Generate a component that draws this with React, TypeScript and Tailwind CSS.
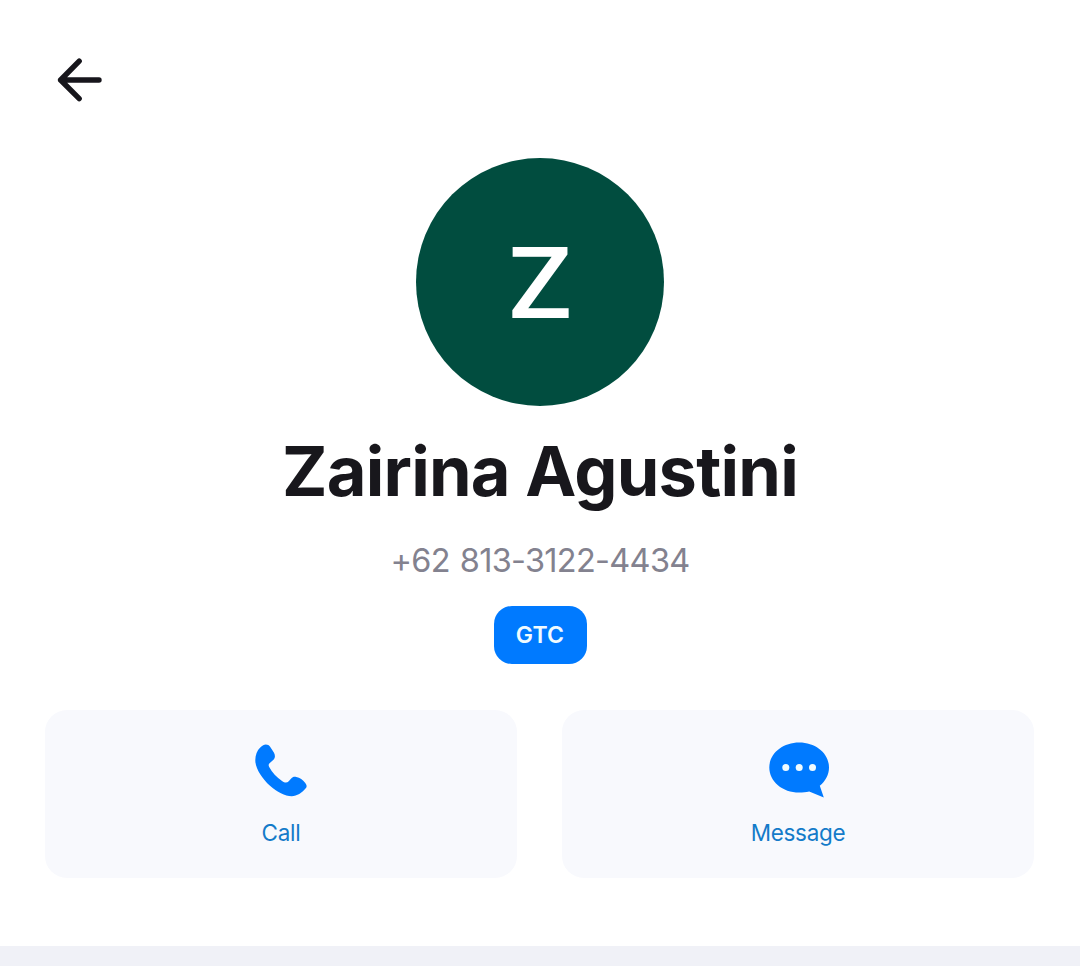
interface ActionCardProps {
    label: string;
    children: React.ReactNode;
}

function ActionCard({ label, children }: ActionCardProps) {
    return (
        <button className="flex h-[168px] flex-1 flex-col items-center rounded-[22px] bg-[#f8f9fd] pt-[30px]">
            {children}
            <span className="mt-[18px] text-[22.5px] leading-[30px] tracking-[-0.3px] text-[#147bc9]">{label}</span>
        </button>
    );
}

export default function App() {
    return (
        <div className="flex h-[966px] w-full flex-col overflow-hidden bg-white font-['Inter','Liberation_Sans',sans-serif] [font-optical-sizing:none]">
            {/* Header */}
            <header className="flex h-[158px] shrink-0 pl-[56px] pt-[56px]">
                <button aria-label="Back" className="h-12 w-12">
                    <svg width="48" height="48" viewBox="0 0 48 48" fill="none" stroke="#17161c" strokeWidth="5.4" strokeLinecap="round" strokeLinejoin="round">
                        <path d="M23.2 5.2L4.6 24L23.2 42.6M4.6 24H43" />
                    </svg>
                </button>
            </header>

            {/* Profile */}
            <section className="flex shrink-0 flex-col items-center">
                <div className="flex h-[248px] w-[248px] items-center justify-center rounded-full bg-[#014d3f]">
                    <span className="scale-x-[1.06] pt-[3px] font-['Roboto',sans-serif] text-[100px] font-medium leading-none text-white">Z</span>
                </div>
                <h1 className="mt-[26px] text-[68.5px] font-bold leading-[80px] tracking-[-0.75px] text-[#18171c]">
                    Zairina Agustini
                </h1>
                <p className="mt-[29px] text-[32.5px] leading-[40px] tracking-[-0.7px] [word-spacing:1.5px] text-[#83828f]">+62 813-3122-4434</p>
                <span className="mt-[25px] flex h-[58px] w-[93px] items-center justify-center rounded-[18px] bg-[#007aff] text-[23px] font-semibold tracking-[0.2px] text-[#f0fbff]">
                    GTC
                </span>
            </section>

            {/* Actions */}
            <section className="mt-[45.5px] flex shrink-0 gap-[45px] pl-[45px] pr-[46px]">
                <ActionCard label="Call">
                    <svg width="60" height="60" viewBox="0 0 60 60" fill="#007aff">
                        <path d="M9 7.8C11.5 5.3 13 4.5 14.8 4.5C16.8 4.5 18 5.2 19.1 6.8L22.7 12.3C24.6 15.4 24.2 18.2 22.2 20L18.8 22.9C17.5 24 17.3 25.3 18.2 27C21 32.3 25.8 37.5 31 41C34 43.1 36 43 37.7 41.2L40.2 38.4C41.6 36.8 43.2 36.5 45.3 36.9C49 37.7 51.7 39.2 54.3 43C56 45.4 56.1 46.8 54.5 48.6C51 53 46 56.2 40.7 56.2C34 56.2 26 52 19 45.8C11 38.5 4.3 28.5 4.3 20.2C4.3 15 6.2 10.5 9 7.8Z" />
                    </svg>
                </ActionCard>
                <ActionCard label="Message">
                    <svg width="62" height="60" viewBox="-1 0.3 62 60">
                        <path fill="#007aff" d="M31.2 2.8C48 2.8 61 13.8 61 27.8C61 35 57.5 41.5 51.8 46L55.8 57.8L41.2 51.8C38 52.6 34.8 52.9 31.2 52.9C14.5 52.9 1.3 41.8 1.3 27.8C1.3 13.8 14.5 2.8 31.2 2.8Z" />
                        <circle cx="17.8" cy="27.8" r="3.5" fill="#f0fbff" />
                        <circle cx="31.2" cy="27.8" r="3.5" fill="#f0fbff" />
                        <circle cx="44.5" cy="27.8" r="3.5" fill="#f0fbff" />
                    </svg>
                </ActionCard>
            </section>

            <div className="mt-auto h-5 shrink-0 bg-[#f0f1f7]" />
        </div>
    );
}
